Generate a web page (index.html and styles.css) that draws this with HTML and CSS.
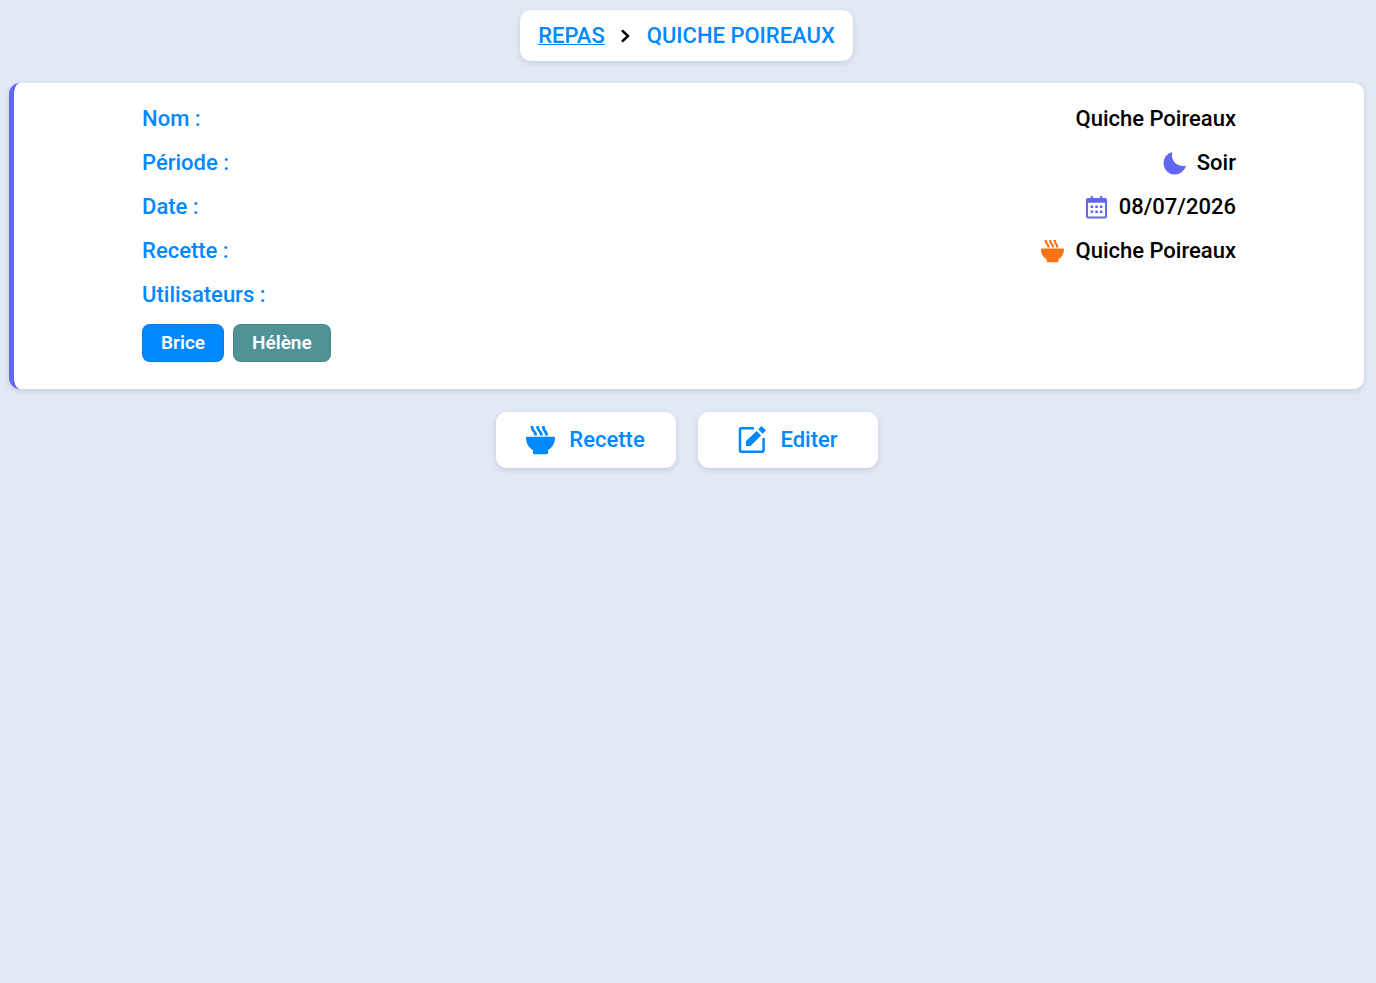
FILE: index.html
```html
<!DOCTYPE html>
<html lang="fr">
<head>
<meta charset="utf-8">
<meta name="viewport" content="width=device-width, initial-scale=1">
<title>Quiche Poireaux</title>
<link rel="stylesheet" href="styles.css">
</head>
<body>
<svg class="sprite" aria-hidden="true">
  <symbol id="bowl" viewBox="0 0 24 24">
    <path d="M.8 8.800h22.400c.5 0 .8.300.8.800 0 4.700-2 8.200-5.800 10.500v2.200c0 .6-.4 1-1 1H6.800c-.6 0-1-.4-1-1v-2.200C2 17.800 0 14.300 0 9.600 0 9.100.300 8.800.8 8.800z"/>
    <path d="M3.700 0h2.400c0 4.200 3.100 3.600 3.100 7.900H6.800C6.800 4.200 3.700 4.600 3.700 0zM8.400 0h2.400c0 4.200 3.100 3.600 3.100 7.900h-2.400C11.500 4.200 8.400 4.600 8.400 0zM13.100 0h2.400c0 4.200 2.700 3.600 2.700 7.900h-2.400C15.800 4.200 13.100 4.600 13.100 0z"/>
  </symbol>
</svg>
<main class="page">
  <nav class="crumbs" aria-label="Fil d'Ariane">
    <a class="crumb-link" href="#">REPAS</a>
    <svg class="chevron" viewBox="0 0 10 14" aria-hidden="true"><path d="M1 1.300L7 7l-6 5.700"/></svg>
    <span>QUICHE POIREAUX</span>
  </nav>

  <section class="card">
    <dl class="details">
      <div class="row"><dt>Nom :</dt><dd>Quiche Poireaux</dd></div>
      <div class="row"><dt>Période :</dt><dd>
        <svg class="icon violet" viewBox="0 0 24 24" aria-hidden="true"><path d="M9.700 0C7.800 8.500 13.500 16 24 14.300A11.900 11.900 0 1 1 9.700 0z"/></svg>
        Soir</dd></div>
      <div class="row"><dt>Date :</dt><dd>
        <svg class="icon violet" viewBox="0 0 24 24" aria-hidden="true"><path fill-rule="evenodd" d="M6 0h2.200v2h7.600V0H18v2h3a2 2 0 0 1 2 2v17.500a2 2 0 0 1-2 2H3a2 2 0 0 1-2-2V4a2 2 0 0 1 2-2h3zM3.100 7v14.400h17.800V7z"/><path d="M5.900 10h2.700v2.600H5.900zM10.700 10h2.700v2.600h-2.700zM15.500 10h2.700v2.600h-2.700zM5.900 15.200h2.700v2.600H5.900zM10.700 15.200h2.700v2.600h-2.700zM15.500 15.200h2.700v2.600h-2.700z"/></svg>
        08/07/2026</dd></div>
      <div class="row"><dt>Recette :</dt><dd>
        <svg class="icon orange" aria-hidden="true"><use href="#bowl"/></svg>
        Quiche Poireaux</dd></div>
      <div class="users"><dt>Utilisateurs :</dt><dd class="tags">
        <span class="tag tag-blue">Brice</span>
        <span class="tag tag-teal">Hélène</span></dd></div>
    </dl>
  </section>

  <div class="actions">
    <button class="action" type="button"><svg class="icon-large" aria-hidden="true"><use href="#bowl"/></svg>Recette</button>
    <button class="action" type="button"><svg class="icon-large" viewBox="0 0 29 29" aria-hidden="true"><path d="M17 2.200H4.200A1.200 1.200 0 0 0 3 3.400V24.600A1.200 1.200 0 0 0 4.200 25.800H25.400A1.200 1.200 0 0 0 26.600 24.600V12" fill="none" stroke="currentColor" stroke-width="2.500"/><path d="M9 15L19.600 4.900l4.500 4.500L13.500 20H9zM21.200 3.300L24.500 0 29 4.500l-3.300 3.300z"/></svg>Editer</button>
  </div>
</main>
</body>
</html>
```
FILE: styles.css
```css
* { box-sizing: border-box; }

body {
  margin: 0;
  background: #e3e8f6;
  color: #000;
  font: 500 22px/34px Roboto, sans-serif;
}

.sprite { position: absolute; width: 0; height: 0; }

.page {
  display: flex;
  flex-direction: column;
  align-items: center;
  gap: 22px;
  padding: 10px 12px 10px 9px;
}

.crumbs,
.card,
.action {
  background: #fff;
  border-radius: 11px;
  box-shadow: 0 2px 6px rgba(0, 0, 0, 0.12);
}

.crumbs {
  display: flex;
  align-items: center;
  gap: 16px;
  padding: 9px 18px 8px;
  color: #08f;
}

.crumb-link {
  color: inherit;
  text-decoration: underline 1px;
}

.chevron {
  width: 10px;
  height: 14px;
  fill: none;
  stroke: #000;
  stroke-width: 2.5;
}

.card {
  width: 100%;
  padding: 19px 9.45% 27px;
  border-left: 5px solid #6366f1;
}

.details {
  display: flex;
  flex-direction: column;
  gap: 10px;
  margin: 0;
}

.row {
  display: flex;
  justify-content: space-between;
}

dt { color: #08f; }

dd {
  display: flex;
  align-items: center;
  gap: 11px;
  margin: 0;
}

.icon {
  width: 23px;
  height: 23px;
  fill: currentColor;
}

.violet { color: #6366f1; }
.orange { color: #f97316; }

.tags {
  flex-wrap: wrap;
  gap: 9px;
  margin-top: 12px;
}

.tag {
  padding: 0 18px;
  border: 1px solid rgba(0, 0, 0, 0.1);
  border-radius: 8px;
  color: #fff;
  font-size: 19px;
  font-weight: 600;
  line-height: 36px;
}

.tag-blue { background: #08f; }
.tag-teal { background: #4f9397; }

.actions {
  display: flex;
  flex-wrap: wrap;
  justify-content: center;
  gap: 22px;
  padding-top: 1px;
}

.action {
  display: flex;
  align-items: center;
  justify-content: center;
  gap: 14px;
  min-width: 180px;
  height: 56px;
  padding: 0 28px;
  border: 0;
  color: #08f;
  font: inherit;
  cursor: pointer;
}

.icon-large {
  width: 29px;
  height: 29px;
  fill: currentColor;
}
```
